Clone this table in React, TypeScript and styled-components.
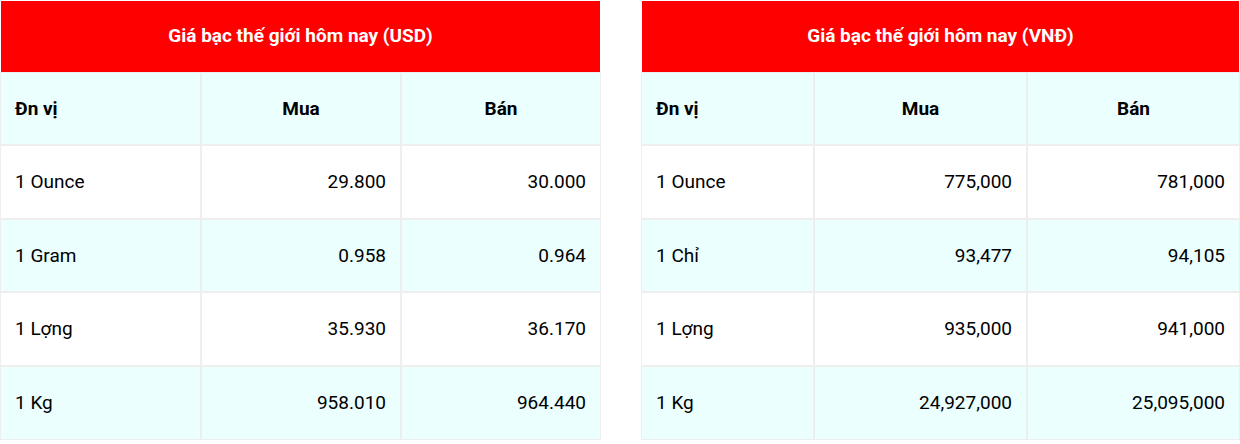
import { FunctionComponent } from "react";
import styled, { createGlobalStyle } from "styled-components";

const GlobalStyle = createGlobalStyle`
  body {
    margin: 0;
    background: #ffffff;
    font-family: Roboto, "Liberation Sans", Arial, sans-serif;
  }
`;

const PageWrapper = styled.div`
  display: flex;
  justify-content: space-between;
  align-items: flex-start;
  width: 1240px;
`;

const PriceTable = styled.table<{ $width: number }>`
  width: ${(p) => p.$width}px;
  border-collapse: separate;
  border-spacing: 0;
  table-layout: fixed;
  font-size: 19px;
  line-height: 21.6px;
  color: #000000;
`;

const TitleCell = styled.th`
  background: #ff0000;
  color: #ffffff;
  font-weight: 700;
  font-size: 19px;
  text-align: center;
  padding: 24px 14px 25px;
  border: 1px solid #ffffff;
  border-bottom: none;
`;

const HeadCell = styled.th<{ $align: "left" | "center" }>`
  background: #ebffff;
  font-weight: 700;
  text-align: ${(p) => p.$align};
  padding: 25px 14px;
  border: 1px solid #eeeeee;
`;

const Row = styled.tr<{ $shaded: boolean }>`
  background: ${(p) => (p.$shaded ? "#ebffff" : "#ffffff")};
`;

const Cell = styled.td<{ $align: "left" | "right" }>`
  text-align: ${(p) => p.$align};
  padding: 25px 14px;
  border: 1px solid #eeeeee;
  white-space: nowrap;
`;

type PriceRow = { unit: string; buy: string; sell: string };

const usdRows: PriceRow[] = [
  { unit: "1 Ounce", buy: "29.800", sell: "30.000" },
  { unit: "1 Gram", buy: "0.958", sell: "0.964" },
  { unit: "1 Lợng", buy: "35.930", sell: "36.170" },
  { unit: "1 Kg", buy: "958.010", sell: "964.440" },
];

const vndRows: PriceRow[] = [
  { unit: "1 Ounce", buy: "775,000", sell: "781,000" },
  { unit: "1 Chỉ", buy: "93,477", sell: "94,105" },
  { unit: "1 Lợng", buy: "935,000", sell: "941,000" },
  { unit: "1 Kg", buy: "24,927,000", sell: "25,095,000" },
];

type TableProps = {
  title: string;
  rows: PriceRow[];
  width: number;
  cols: number[];
};

const SilverTable: FunctionComponent<TableProps> = ({ title, rows, width, cols }) => (
  <PriceTable $width={width}>
    <colgroup>
      {cols.map((c, i) => (
        <col key={i} style={{ width: c }} />
      ))}
    </colgroup>
    <thead>
      <tr>
        <TitleCell colSpan={3}>{title}</TitleCell>
      </tr>
      <tr>
        <HeadCell $align="left">Đn vị</HeadCell>
        <HeadCell $align="center">Mua</HeadCell>
        <HeadCell $align="center">Bán</HeadCell>
      </tr>
    </thead>
    <tbody>
      {rows.map((r, i) => (
        <Row key={r.unit} $shaded={i % 2 === 1}>
          <Cell $align="left">{r.unit}</Cell>
          <Cell $align="right">{r.buy}</Cell>
          <Cell $align="right">{r.sell}</Cell>
        </Row>
      ))}
    </tbody>
  </PriceTable>
);

const App: FunctionComponent = () => (
  <>
    <GlobalStyle />
    <PageWrapper>
      <SilverTable
        title="Giá bạc thế giới hôm nay (USD)"
        rows={usdRows}
        width={601}
        cols={[201, 200, 200]}
      />
      <SilverTable
        title="Giá bạc thế giới hôm nay (VNĐ)"
        rows={vndRows}
        width={599}
        cols={[173, 213, 213]}
      />
    </PageWrapper>
  </>
);

export default App;
